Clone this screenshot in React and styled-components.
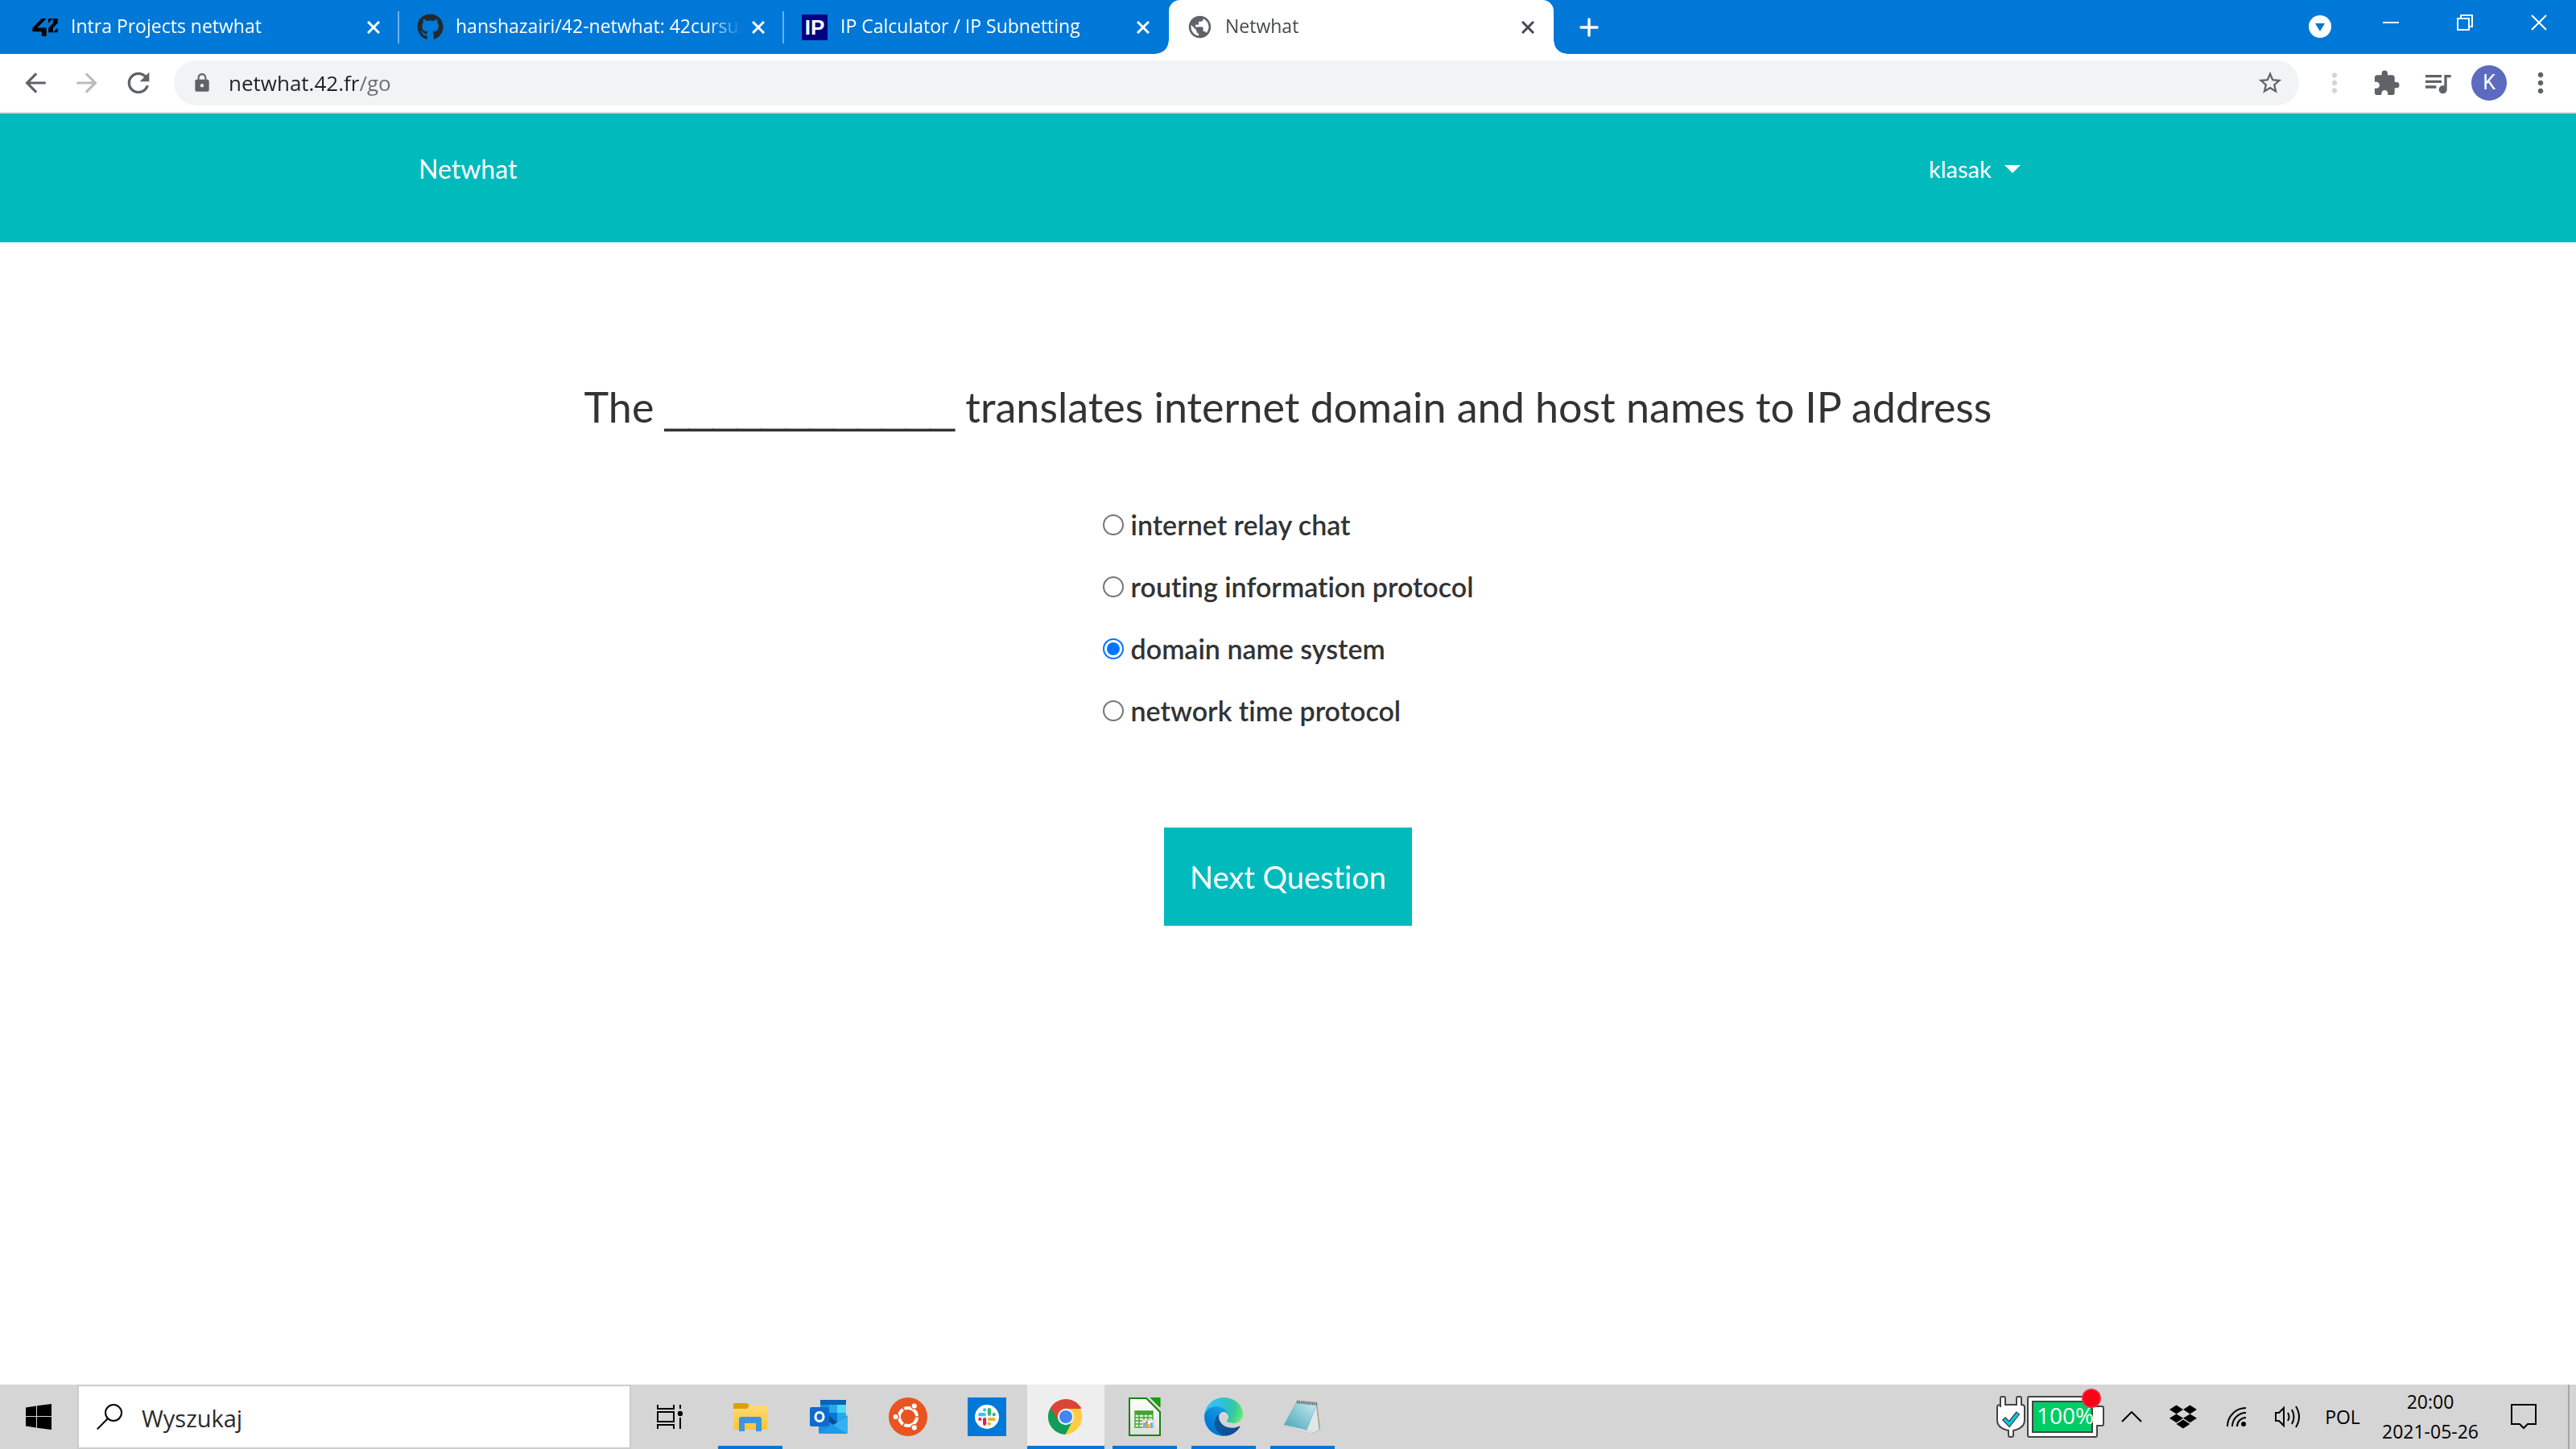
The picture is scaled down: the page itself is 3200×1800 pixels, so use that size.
import React from "react";
import styled, { createGlobalStyle, css } from "styled-components";
import { FaGithub, FaDropbox } from "react-icons/fa";
import {
  MdArrowBack,
  MdArrowForward,
  MdRefresh,
  MdLock,
  MdStarBorder,
  MdExtension,
  MdQueueMusic,
  MdMoreVert,
  MdPublic,
} from "react-icons/md";

const uiFont = '"Open Sans", "Noto Sans", sans-serif';
const siteFont = 'Lato, "Open Sans", sans-serif';
const blue = "#0078d7";
const teal = "#00babc";

const GlobalStyle = createGlobalStyle`
  *, *::before, *::after { box-sizing: border-box; }
  body { margin: 0; background: #fff; }
  button, input { font: inherit; color: inherit; margin: 0; }
  svg { display: block; flex: none; }
`;

const Screen = styled.div`
  display: flex;
  flex-direction: column;
  min-height: 100vh;
  font-family: ${uiFont};
  font-variant-ligatures: none;
`;

const PlainButton = styled.button`
  display: flex;
  align-items: center;
  justify-content: center;
  padding: 0;
  border: 0;
  background: none;
  cursor: pointer;
`;

/* ---------- browser window ---------- */

const TabStrip = styled.div`
  display: flex;
  align-items: center;
  height: 67px;
  padding-left: 18px;
  background: ${blue};
  color: #fff;
`;

const flare = css`
  content: "";
  position: absolute;
  bottom: 0;
  width: 16px;
  height: 16px;
`;

const Tab = styled.div`
  position: relative;
  display: flex;
  align-items: center;
  gap: 16px;
  flex: 0 1 478px;
  min-width: 0;
  height: 40px;
  padding: 0 14px 0 22px;
  border-right: 2px solid ${(p) => (p.$last ? "transparent" : "#6bb2ea")};
  font-size: 23px;
  line-height: 32px;
  ${(p) =>
    p.$active &&
    css`
      height: 67px;
      border-right: 0;
      padding-right: 16px;
      border-radius: 14px 14px 0 0;
      background: #fff;
      color: #45494d;
      &::before {
        ${flare}
        left: -16px;
        background: radial-gradient(circle at 0 0, transparent 15px, #fff 16px);
      }
      &::after {
        ${flare}
        right: -16px;
        background: radial-gradient(circle at 100% 0, transparent 15px, #fff 16px);
      }
    `}
`;

const TabIcon = styled.span`
  display: flex;
  align-items: center;
  justify-content: center;
  flex: none;
  width: 32px;
  height: 32px;
  color: ${(p) => p.$color || "#000"};
  background: ${(p) => p.$fill || "none"};
`;

const IpMark = styled.span`
  color: #fff;
  font: 700 26px/32px "Liberation Sans", sans-serif;
`;

const TabTitle = styled.button`
  flex: 1;
  min-width: 0;
  margin-right: -16px;
  padding: 0 0 3px;
  border: 0;
  background: none;
  white-space: nowrap;
  text-align: left;
  mask-image: linear-gradient(90deg, #000 calc(100% - 48px), transparent calc(100% - 4px));
`;

const SmallButton = styled(PlainButton)`
  flex: none;
  width: 32px;
  height: 32px;
  margin-left: ${(p) => p.$before || 0}px;
`;

const WindowControls = styled.div`
  display: flex;
  height: 56px;
  align-self: flex-start;
  margin-left: auto;
`;

const WindowButton = styled(PlainButton)`
  width: 92px;
`;

const TabSearch = styled(PlainButton)`
  width: 84px;
  height: 66px;
`;

const Toolbar = styled.div`
  display: flex;
  align-items: center;
  height: 74px;
  padding: 0 12px;
  border-bottom: 2px solid #d9dde2;
  background: #fff;
  color: #5f6368;
`;

const ToolButton = styled(PlainButton)`
  width: 64px;
  height: 56px;
  color: ${(p) => p.$color || "#5f6368"};
`;

const AddressBar = styled.form`
  display: flex;
  align-items: center;
  flex: 1;
  gap: 20px;
  height: 56px;
  margin: 0 12px;
  padding: 0 19px 0 22px;
  border-radius: 28px;
  background: #f1f3f4;
`;

const Address = styled.input`
  flex: 1;
  min-width: 0;
  padding: 0;
  border: 0;
  outline: 0;
  font-size: 26px;
  line-height: 40px;
  color: transparent;
  background: linear-gradient(90deg, #202124 162px, #6a6e73 162px);
  background-clip: text;
`;

const Avatar = styled.span`
  width: 44px;
  height: 44px;
  border-radius: 50%;
  background: #5c6bc0;
  color: #fff;
  font: 400 25px/44px Roboto, sans-serif;
  text-align: center;
`;

/* ---------- quiz page ---------- */

const SiteHeader = styled.header`
  background: ${teal};
  color: #fff;
  font-family: ${siteFont};
`;

const HeaderInner = styled.div`
  display: flex;
  align-items: center;
  justify-content: space-between;
  max-width: 2160px;
  height: 160px;
  margin: 0 auto;
  padding-bottom: 22px;
`;

const Brand = styled.a`
  color: inherit;
  text-decoration: none;
  font-size: 32px;
  line-height: 48px;
`;

const UserMenu = styled(PlainButton)`
  justify-content: flex-start;
  gap: 16px;
  width: 284px;
  font-size: 29px;
  line-height: 48px;
`;

const Caret = styled.span`
  border: 10px solid transparent;
  border-top-color: #fff;
  border-bottom: 0;
`;

const Quiz = styled.main`
  flex: 1;
  display: flex;
  flex-direction: column;
  align-items: center;
  padding: 168px 40px 40px;
  background: #fff;
  color: #333;
  font-family: ${siteFont};
`;

const Question = styled.h1`
  margin: 0;
  font-size: 52px;
  font-weight: 400;
  line-height: 72px;
  text-align: center;
`;

const Blank = styled.span`
  font-family: "Liberation Sans", sans-serif;
  font-size: 54px;
  line-height: 1;
`;

const Answers = styled.fieldset`
  display: flex;
  flex-direction: column;
  margin: 72px 0 0;
  padding: 0;
  border: 0;
`;

const Answer = styled.label`
  display: flex;
  align-items: center;
  gap: 9px;
  height: 77px;
  font-size: 34px;
  font-weight: 600;
  line-height: 48px;
`;

const Radio = styled.input`
  appearance: none;
  width: 26px;
  height: 26px;
  padding: 3px;
  border: 2px solid #767676;
  border-radius: 50%;
  background: #fff;
  &:checked {
    border-color: #0075ff;
    background: #0075ff content-box;
  }
`;

const NextButton = styled(PlainButton)`
  height: 122px;
  margin-top: 107px;
  padding: 0 32px;
  background: ${teal};
  color: #fff;
  font-size: 38px;
  line-height: 60px;
`;

/* ---------- taskbar ---------- */

const Taskbar = styled.footer`
  display: flex;
  align-items: center;
  height: 80px;
  background: #d5d5d5;
  color: #000;
`;

const StartButton = styled(PlainButton)`
  width: 96px;
  height: 80px;
`;

const SearchBox = styled.label`
  display: flex;
  align-items: center;
  gap: 24px;
  width: 688px;
  height: 80px;
  padding-left: 22px;
  border: 2px solid #ccc;
  background: #fff;
`;

const SearchInput = styled.input`
  flex: 1;
  min-width: 0;
  padding: 4px 0 0;
  border: 0;
  outline: 0;
  background: none;
  font-size: 29px;
  line-height: 40px;
  &::placeholder {
    color: #2b2b2b;
    opacity: 1;
  }
`;

const Apps = styled.div`
  display: flex;
  gap: 2px;
`;

const AppButton = styled(PlainButton)`
  width: 96px;
  height: 80px;
  background:
    linear-gradient(${blue}, ${blue}) bottom / ${(p) => (p.$active ? 96 : p.$open ? 80 : 0)}px 4px no-repeat,
    ${(p) => (p.$active ? "#eee" : "transparent")};
`;

const TaskViewButton = styled(AppButton)`
  margin-right: 4px;
`;

const Tray = styled.div`
  display: flex;
  align-items: center;
  margin-left: auto;
  height: 80px;
  font-size: 23px;
`;

const TrayButton = styled(PlainButton)`
  width: ${(p) => p.$w || 64}px;
  height: 80px;
`;

const Notifications = styled(TrayButton)`
  padding-right: 10px;
`;

const Clock = styled(PlainButton)`
  flex-direction: column;
  width: 142px;
  height: 80px;
  line-height: 37px;
`;

const ShowDesktop = styled.button`
  width: 10px;
  height: 80px;
  padding: 0;
  border: 0;
  border-left: 2px solid #a6a6a6;
  background: none;
`;

/* ---------- drawings ---------- */

const Logo42 = () => (
  <svg width="32" height="22" viewBox="32 -51 896 630">
    <path d="M32 412.6H362.1V578H526.8V279.1H197.3L526.8-51.1H362.1L32 279.1zM597.9 114.2 762.7-51.1H597.9zM762.7 114.2 597.9 279.1V443.9H762.7V279.1L928 114.2V-51.1H762.7zM928 279.1 762.7 443.9H928z" />
  </svg>
);

const Cross = ({ size = 16, width = 3 }) => (
  <svg width={size} height={size} viewBox={`0 0 ${size} ${size}`} stroke="currentColor" strokeWidth={width}>
    <path d={`M1 1 ${size - 1} ${size - 1}M${size - 1} 1 1 ${size - 1}`} />
  </svg>
);

const Plus = () => (
  <svg width="24" height="24" stroke="currentColor" strokeWidth="3.4" strokeLinecap="round">
    <path d="M12 2V22M2 12H22" />
  </svg>
);

const WindowsLogo = () => (
  <svg width="32" height="32">
    <path d="M0 4.5 13 2.4V15H0zM14 2.2 32 0V15H14zM0 16H13V29.5L0 27.4zM14 16H32V32L14 29.7z" />
  </svg>
);

const Magnifier = () => (
  <svg width="32" height="32" fill="none" stroke="#000" strokeWidth="2">
    <circle cx="21" cy="11" r="10" />
    <path d="M14 18 .8 31.4" />
  </svg>
);

const TaskViewIcon = () => (
  <svg width="32" height="30" fill="none" stroke="#000" strokeWidth="2">
    <path d="M1 0V5H21V0M1 30V25H21V30M1 9H21V21H1zM29 0V5M29 16V30" />
    <circle cx="29" cy="11" r="3.2" fill="#000" stroke="none" />
  </svg>
);

const ExplorerIcon = () => (
  <svg width="42" height="35">
    <defs>
      <linearGradient id="folder" x2="0" y2="1">
        <stop stopColor="#ffda75" />
        <stop offset="1" stopColor="#fdc438" />
      </linearGradient>
    </defs>
    <path d="M0 10V2Q0 0 2 0H17L20 3 18 10z" fill="#dfa003" />
    <path d="M0 7H17L20 3H40Q42 3 42 5V31Q42 33 40 33H2Q0 33 0 31z" fill="url(#folder)" />
    <path d="M7 35V20Q7 17 10 17H32Q35 17 35 20V35H28V25H14V35z" fill="#3c96dd" />
  </svg>
);

const OutlookIcon = () => (
  <svg width="48" height="43">
    <path d="M13 0H45V24H13z" fill="#0a63b4" />
    <path d="M13 6H24V16H13z" fill="#1490df" />
    <path d="M24 6H34V16H24z" fill="#28a8ea" />
    <path d="M34 6H45V16H34z" fill="#50d9ff" />
    <path d="M24 16H34V28H24z" fill="#0078d4" />
    <path d="M34 16H45V26L34 30z" fill="#28a8ea" />
    <path d="M11 20 29 31 47 19V40Q47 42 45 42H13Q11 42 11 40z" fill="#1b8fe0" />
    <path d="M47 20V40Q47 42 45 42L27 32z" fill="#35b0f0" />
    <path d="M11 42 46 42 29 31z" fill="#1f9ae6" />
    <path d="M24 28 29 31 34 28 24 20z" fill="#0a4c8d" />
    <rect y="9" width="24" height="24" rx="2" fill="#0f6cce" />
    <ellipse cx="12" cy="21" rx="5" ry="5.6" fill="none" stroke="#fff" strokeWidth="3" />
  </svg>
);

const UbuntuIcon = () => (
  <svg width="48" height="48">
    <circle cx="24" cy="24" r="24" fill="#e95420" />
    <circle cx="24" cy="24" r="11" fill="none" stroke="#fff" strokeWidth="4" />
    <g stroke="#e95420" strokeWidth="1.6">
      <path d="M24 24H40M24 24 16 10M24 24 16 38" />
    </g>
    <circle cx="24" cy="24" r="8.8" fill="#e95420" />
    <g fill="#fff" stroke="#e95420" strokeWidth="1.4">
      <circle cx="8.6" cy="24" r="3.8" />
      <circle cx="31.8" cy="10.6" r="3.8" />
      <circle cx="31.8" cy="37.4" r="3.8" />
    </g>
  </svg>
);

const SlackIcon = () => (
  <svg width="48" height="48">
    <path d="M0 0H48V48H0z" fill="#0078d7" />
    <circle cx="24" cy="24" r="15" fill="#fff" />
    <g strokeWidth="4.2" strokeLinecap="round">
      <path d="M15.2 21.2H20.8M21.1 15.4V15.6" stroke="#36c5f0" />
      <path d="M26.9 15V20.8M32.7 21.2H32.8" stroke="#2eb67d" />
      <path d="M27 27H32.8M26.9 32.6V32.7" stroke="#ecb22e" />
      <path d="M21.1 27V32.8M15.3 27H15.4" stroke="#e01e5a" />
    </g>
  </svg>
);

const ChromeIcon = () => (
  <svg width="46" height="46" viewBox="0 0 48 48">
    <path d="M24 24 4.1 12.5A23 23 0 0 1 43.9 12.5L42 16z" fill="#db4437" />
    <path d="M24 24 4.1 12.5A23 23 0 0 0 24 47L33 29z" fill="#0f9d58" />
    <path d="M24 13.5H42.5A23 23 0 0 1 23.5 47L33.5 29z" fill="#ffcd40" />
    <path d="M4.1 12.5 14.5 29 24 13.5z" fill="#db4437" />
    <circle cx="24" cy="24" r="10.6" fill="#f1f1f1" />
    <circle cx="24" cy="24" r="8.4" fill="#4285f4" />
  </svg>
);

const CalcIcon = () => (
  <svg width="40" height="48">
    <defs>
      <linearGradient id="sheet" x2="0" y2="1">
        <stop stopColor="#fff" />
        <stop offset="1" stopColor="#dedede" />
      </linearGradient>
    </defs>
    <path d="M1 1H22L39 18V47H1z" fill="url(#sheet)" stroke="#148603" strokeWidth="2" />
    <path d="M27 0H39V12z" fill="#18a303" stroke="#148603" />
    <path d="M8 17H30V37H8z" fill="#e8f6e4" />
    <path d="M8 17H30V21H8z" fill="#43a430" />
    <path d="M8 17V37H30V17zM13 17V37M19 17V37M24 17V37M8 21H30M8 25H30M8 29H30M8 33H30" fill="none" stroke="#43a430" strokeWidth="1.4" />
    <path d="M17 28H31V37H17z" fill="#fff" stroke="#bbb" />
    <path d="M18 31H21V37H18z" fill="#63bbee" />
    <path d="M21 29H24V37H21z" fill="#f28c5a" />
    <path d="M24 33H27V37H24z" fill="#f8c843" />
    <path d="M27 31H30V37H27z" fill="#63bbee" />
  </svg>
);

const EdgeIcon = () => (
  <svg width="48" height="48" viewBox="4.6 4.9 256 256">
    <defs>
      <linearGradient id="edgeDark" x1="63" y1="178" x2="241" y2="178" gradientUnits="userSpaceOnUse">
        <stop stopColor="#0c59a4" />
        <stop offset="1" stopColor="#114a8b" />
      </linearGradient>
      <linearGradient id="edgeMid" x1="157" y1="104" x2="46" y2="226" gradientUnits="userSpaceOnUse">
        <stop stopColor="#1b9de2" />
        <stop offset=".2" stopColor="#1595df" />
        <stop offset=".7" stopColor="#0680d7" />
        <stop offset="1" stopColor="#0078d4" />
      </linearGradient>
      <radialGradient id="edgeTop" cx="30" cy="60" r="235" gradientUnits="userSpaceOnUse">
        <stop stopColor="#35c1f1" />
        <stop offset=".25" stopColor="#34c1ed" />
        <stop offset=".5" stopColor="#2fc2c8" />
        <stop offset=".75" stopColor="#36c9a0" />
        <stop offset="1" stopColor="#66eb6e" />
      </radialGradient>
    </defs>
    <path fill="url(#edgeDark)" d="M235.68 195.46a93.73 93.73 0 0 1-10.54 4.71 101.87 101.87 0 0 1-35.9 6.46c-47.32 0-88.54-32.55-88.54-74.32a31.48 31.48 0 0 1 16.43-27.31c-42.8 1.8-53.8 46.4-53.8 72.53 0 73.88 68.09 81.37 82.76 81.37 7.91 0 19.84-2.3 27-4.56l1.31-.44a128.34 128.34 0 0 0 66.6-52.8 4 4 0 0 0-5.32-5.64z" />
    <path fill="url(#edgeMid)" d="M110.34 246.34A79.2 79.2 0 0 1 87.6 225a80.72 80.72 0 0 1 29.53-120c3.12-1.47 8.45-4.13 15.54-4a32.35 32.35 0 0 1 25.69 13 31.88 31.88 0 0 1 6.36 18.66c0-.21 24.46-79.6-80-79.6-43.9 0-80 41.66-80 78.21a130.15 130.15 0 0 0 12.11 56 128 128 0 0 0 156.38 67.11 75.55 75.55 0 0 1-62.78-8z" />
    <path fill="url(#edgeTop)" d="M156.94 153.78c-.81 1.05-3.3 2.5-3.3 5.66 0 2.61 1.7 5.12 4.72 7.23 14.38 10 41.49 8.68 41.56 8.68a59.56 59.56 0 0 0 30.27-8.35 61.38 61.38 0 0 0 30.43-52.88c.26-22.41-8-37.31-11.34-43.91C228.09 28.76 182.35 5 132.61 5a128 128 0 0 0-128 126.2c.48-36.54 36.8-66.05 80-66.05 3.5 0 23.46.34 42 10.07 16.34 8.58 24.9 18.94 30.85 29.21 6.18 10.67 7.28 24.15 7.28 29.52s-2.74 13.33-7.8 19.83z" />
  </svg>
);

const NotepadIcon = () => (
  <svg width="46" height="42">
    <defs>
      <linearGradient id="pad" x1="1" x2="0" y2="1">
        <stop stopColor="#c9edf2" />
        <stop offset="1" stopColor="#43a5b8" />
      </linearGradient>
    </defs>
    <path d="M41 4 45 36 37 40z" fill="#b08a4a" />
    <path d="M40 4 44 37 35 42 28 38z" fill="#dfe7ea" stroke="#9aa7ac" strokeWidth=".6" />
    <path d="M0 32 35 42 35 40 1 30z" fill="#eef3f5" stroke="#a5b1b5" strokeWidth=".5" />
    <path d="M16 2 41 5 28 37 0 31z" fill="url(#pad)" stroke="#7fa9b1" strokeWidth=".6" />
    <path d="M16 2.5 41 5" stroke="#666" strokeWidth="4" strokeDasharray="1.4 1" />
  </svg>
);

const BatteryIcon = () => (
  <svg width="136" height="80" viewBox="0 -8 136 80">
    <g stroke="#444" strokeWidth="2" fill="#fff">
      <path d="M5 20V9Q5 7 7 7H9Q11 7 11 9V17H25V9Q25 7 27 7H29Q31 7 31 9V17Q35 17 35 20V36Q35 46 21 49V55Q21 57 19 57H17Q15 57 15 55V49Q1 46 1 36V20Q1 17 5 17z" />
      <path d="M41 7H122Q124 7 124 9V19H131Q133 19 133 21V41Q133 43 131 43H125V55Q125 57 123 57H41Q39 57 39 55V9Q39 7 41 7z" />
      <path d="M45 13H119V51H45z" fill="#00cc66" />
    </g>
    <path d="M9 34 16 41 27 27" fill="none" stroke="#444" strokeWidth="6" />
    <path d="M10 35 16 41 26.5 28" fill="none" stroke="#00c8f0" strokeWidth="3.5" />
    <text x="50" y="41" fill="#fff" fontFamily={uiFont} fontSize="28">
      100%
    </text>
    <circle cx="118" cy="9" r="12" fill="#e8384f" />
    <circle cx="118" cy="9" r="10.5" fill="#ff0015" />
  </svg>
);

const WifiIcon = () => (
  <svg width="24" height="24" fill="none" stroke="#000" strokeWidth="2">
    <path d="M1 24A23 23 0 0 1 24 1M7 24A17 17 0 0 1 24 7M13 24A11 11 0 0 1 24 13" />
    <circle cx="21" cy="21" r="3" fill="#000" stroke="none" />
  </svg>
);

const SpeakerIcon = () => (
  <svg width="32" height="28" fill="none" stroke="#000" strokeWidth="2">
    <path d="M1 9H5L11 3V25L5 19H1zM16 9Q19 14 16 19M21 5Q26 14 21 23M26 1Q34 14 26 27" />
  </svg>
);

const tabs = [
  { title: "Intra Projects netwhat", icon: <Logo42 /> },
  { title: "hanshazairi/42-netwhat: 42cursus", icon: <FaGithub size={33} />, color: "#24292e" },
  { title: "IP Calculator / IP Subnetting", icon: <IpMark>IP</IpMark>, fill: "#000080", last: true },
  { title: "Netwhat", icon: <MdPublic size={33} />, color: "#5f6368", active: true },
];

const answers = [
  "internet relay chat",
  "routing information protocol",
  "domain name system",
  "network time protocol",
];

const apps = [
  { name: "File Explorer", icon: <ExplorerIcon />, open: true },
  { name: "Outlook", icon: <OutlookIcon /> },
  { name: "Ubuntu", icon: <UbuntuIcon /> },
  { name: "Slack", icon: <SlackIcon /> },
  { name: "Chrome", icon: <ChromeIcon />, active: true },
  { name: "LibreOffice Calc", icon: <CalcIcon />, open: true },
  { name: "Edge", icon: <EdgeIcon />, open: true },
  { name: "Notepad", icon: <NotepadIcon />, open: true },
];

export default function App() {
  return (
    <Screen>
      <GlobalStyle />
      <TabStrip>
        {tabs.map((t) => (
          <Tab key={t.title} $active={t.active} $last={t.last}>
            <TabIcon $color={t.color} $fill={t.fill}>
              {t.icon}
            </TabIcon>
            <TabTitle>{t.title}</TabTitle>
            <SmallButton aria-label="Close tab">
              <Cross />
            </SmallButton>
          </Tab>
        ))}
        <SmallButton aria-label="New tab" $before={28}>
          <Plus />
        </SmallButton>
        <WindowControls>
          <TabSearch aria-label="Search tabs">
            <svg width="28" height="28">
              <circle cx="14" cy="14" r="14" fill="#fff" />
              <path d="M8 10H20L14 20z" fill={blue} />
            </svg>
          </TabSearch>
          <WindowButton aria-label="Minimize">
            <svg width="20" height="2">
              <path d="M0 0H20V2H0z" fill="#fff" />
            </svg>
          </WindowButton>
          <WindowButton aria-label="Restore">
            <svg width="20" height="20" fill="none" stroke="#fff" strokeWidth="2">
              <path d="M1 5H15V19H1zM5 5V1H19V15H15" />
            </svg>
          </WindowButton>
          <WindowButton aria-label="Close">
            <Cross size={20} width={2} />
          </WindowButton>
        </WindowControls>
      </TabStrip>

      <Toolbar>
        <ToolButton aria-label="Back">
          <MdArrowBack size={38} />
        </ToolButton>
        <ToolButton aria-label="Forward" $color="#babcbe">
          <MdArrowForward size={38} />
        </ToolButton>
        <ToolButton aria-label="Reload">
          <MdRefresh size={40} />
        </ToolButton>
        <AddressBar>
          <MdLock size={26} />
          <Address aria-label="Address" defaultValue="netwhat.42.fr/go" />
          <MdStarBorder size={34} />
        </AddressBar>
        <ToolButton aria-label="Separator" $color="#d4d5d6">
          <MdMoreVert size={38} />
        </ToolButton>
        <ToolButton aria-label="Extensions">
          <MdExtension size={35} />
        </ToolButton>
        <ToolButton aria-label="Media">
          <MdQueueMusic size={40} />
        </ToolButton>
        <ToolButton aria-label="Profile">
          <Avatar>K</Avatar>
        </ToolButton>
        <ToolButton aria-label="Menu">
          <MdMoreVert size={40} />
        </ToolButton>
      </Toolbar>

      <SiteHeader>
        <HeaderInner>
          <Brand href="#">Netwhat</Brand>
          <UserMenu>
            klasak
            <Caret />
          </UserMenu>
        </HeaderInner>
      </SiteHeader>

      <Quiz>
        <Question>
          The <Blank>____________</Blank> translates internet domain and host names to IP address
        </Question>
        <Answers>
          {answers.map((a) => (
            <Answer key={a}>
              <Radio type="radio" name="answer" defaultChecked={a === "domain name system"} />
              {a}
            </Answer>
          ))}
        </Answers>
        <NextButton>Next Question</NextButton>
      </Quiz>

      <Taskbar>
        <StartButton aria-label="Start">
          <WindowsLogo />
        </StartButton>
        <SearchBox>
          <Magnifier />
          <SearchInput aria-label="Wyszukaj" placeholder="Wyszukaj" />
        </SearchBox>
        <TaskViewButton aria-label="Task View">
          <TaskViewIcon />
        </TaskViewButton>
        <Apps>
          {apps.map((a) => (
            <AppButton key={a.name} aria-label={a.name} $open={a.open} $active={a.active}>
              {a.icon}
            </AppButton>
          ))}
        </Apps>
        <Tray>
          <BatteryIcon />
          <TrayButton aria-label="Hidden icons">
            <svg width="26" height="14" fill="none" stroke="#000" strokeWidth="2">
              <path d="M1 13 13 1 25 13" />
            </svg>
          </TrayButton>
          <TrayButton aria-label="Dropbox">
            <FaDropbox size={34} />
          </TrayButton>
          <TrayButton aria-label="Network" $w={68}>
            <WifiIcon />
          </TrayButton>
          <TrayButton aria-label="Volume" $w={60}>
            <SpeakerIcon />
          </TrayButton>
          <TrayButton $w={76}>POL</TrayButton>
          <Clock>
            <time>20:00</time>
            <time>2021-05-26</time>
          </Clock>
          <Notifications aria-label="Notifications" $w={100}>
            <svg width="32" height="32" fill="none" stroke="#000" strokeWidth="2">
              <path d="M1 1H31V25H21L16 30 11 25H1z" />
            </svg>
          </Notifications>
          <ShowDesktop aria-label="Show desktop" />
        </Tray>
      </Taskbar>
    </Screen>
  );
}
